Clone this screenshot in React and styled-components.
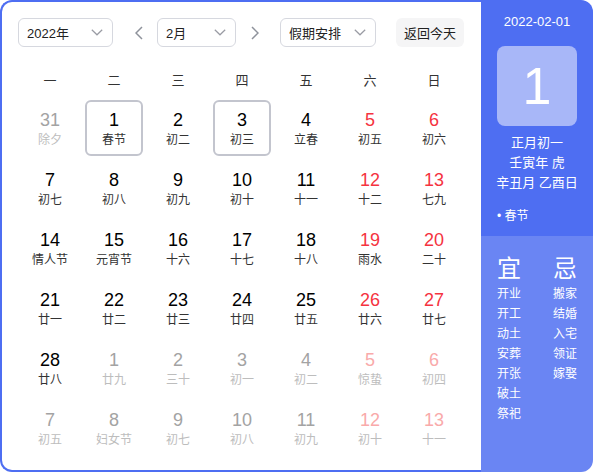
import React from "react";
import styled, { createGlobalStyle } from "styled-components";

const Global = createGlobalStyle`
  html, body { margin: 0; padding: 0; background: #fff; }
  body { font-family: "Liberation Sans", "Noto Sans CJK SC", sans-serif; }
  * { box-sizing: border-box; }
`;

const Frame = styled.div`
  width: 593px;
  height: 472px;
  display: flex;
`;

const Main = styled.div`
  flex: 1;
  border: 2px solid #4e6ef2;
  border-right: none;
  border-radius: 12px 0 0 12px;
  padding: 16px 15px 0 16px;
  background: #fff;
`;

const Toolbar = styled.div`
  display: flex;
  align-items: center;
  height: 29px;
`;

const Select = styled.div`
  width: ${(p) => p.$w}px;
  height: 29px;
  border: 1px solid #d6d8df;
  border-radius: 6px;
  display: flex;
  align-items: center;
  justify-content: space-between;
  padding: 0 9px 0 8px;
  font-size: 13px;
  color: #222;
  background: #fff;
`;

const ArrowBtn = styled.div`
  width: 20px;
  height: 29px;
  display: flex;
  align-items: center;
  justify-content: center;
  margin: ${(p) => p.$m};
`;

const TodayBtn = styled.div`
  margin-left: 20px;
  width: 68px;
  height: 29px;
  border-radius: 6px;
  background: #f5f5f6;
  display: flex;
  align-items: center;
  justify-content: center;
  font-size: 13px;
  color: #222;
`;

const Week = styled.div`
  display: grid;
  grid-template-columns: repeat(7, 64px);
  margin-top: 19px;
  height: 30px;
  line-height: 30px;
  text-align: center;
  font-size: 13px;
  color: #333;
`;

const Grid = styled.div`
  display: grid;
  grid-template-columns: repeat(7, 64px);
  grid-auto-rows: 56px;
  row-gap: 4px;
  margin-top: 4px;
`;

const Cell = styled.div`
  margin: 0 3px;
  border: 2px solid ${(p) => (p.$boxed ? "#c3c5ce" : "transparent")};
  border-radius: 6px;
  display: flex;
  flex-direction: column;
  align-items: center;
  padding-top: 7px;
`;

const numColor = (p) => {
  if (p.$other) return p.$weekend ? "#f9aaaa" : "#a3a3a3";
  return p.$weekend ? "#f5333f" : "#000";
};

const Num = styled.div`
  font-size: 18px;
  line-height: 22px;
  color: ${numColor};
`;

const Lunar = styled.div`
  font-size: 12px;
  line-height: 18px;
  color: ${(p) => (p.$other ? "#bdbdbd" : "#333")};
`;

const Side = styled.div`
  width: 112px;
  border-radius: 0 12px 12px 0;
  overflow: hidden;
  display: flex;
  flex-direction: column;
  color: #fff;
`;

const SideTop = styled.div`
  height: 236px;
  background: #4e6ef2;
  display: flex;
  flex-direction: column;
  align-items: center;
  padding-top: 12px;
`;

const DateLine = styled.div`
  font-size: 13px;
  line-height: 20px;
`;

const BigDay = styled.div`
  margin-top: 14px;
  width: 80px;
  height: 80px;
  border-radius: 8px;
  background: #a8b7f8;
  display: flex;
  align-items: center;
  justify-content: center;
  font-size: 52px;
  font-weight: 300;
  line-height: 1;
`;

const LunarInfo = styled.div`
  margin-top: 7px;
  text-align: center;
  font-size: 13px;
  line-height: 20px;
`;

const Festival = styled.div`
  align-self: stretch;
  padding-left: 16px;
  margin-top: 14px;
  font-size: 12px;
  line-height: 18px;
`;

const SideBottom = styled.div`
  flex: 1;
  background: #6a85f3;
  display: grid;
  grid-template-columns: 56px 56px;
  align-content: start;
  padding-top: 18px;
`;

const Col = styled.div`
  display: flex;
  flex-direction: column;
  align-items: center;
`;

const Head = styled.div`
  font-size: 24px;
  line-height: 30px;
`;

const Item = styled.div`
  font-size: 12px;
  line-height: 20px;
`;

const Chevron = () => (
  <svg width="12" height="7" viewBox="0 0 12 7">
    <polyline points="0.8,0.8 6,5.8 11.2,0.8" fill="none" stroke="#9a9ca4" strokeWidth="1.2" />
  </svg>
);

const Arrow = ({ dir }) => (
  <svg width="8" height="14" viewBox="0 0 8 14">
    <polyline
      points={dir === "left" ? "7,1 1,7 7,13" : "1,1 7,7 1,13"}
      fill="none"
      stroke="#8e929b"
      strokeWidth="1.5"
    />
  </svg>
);

const rows = [
  [["31", "除夕", 1], ["1", "春节", 0, 1], ["2", "初二"], ["3", "初三", 0, 1], ["4", "立春"], ["5", "初五"], ["6", "初六"]],
  [["7", "初七"], ["8", "初八"], ["9", "初九"], ["10", "初十"], ["11", "十一"], ["12", "十二"], ["13", "七九"]],
  [["14", "情人节"], ["15", "元宵节"], ["16", "十六"], ["17", "十七"], ["18", "十八"], ["19", "雨水"], ["20", "二十"]],
  [["21", "廿一"], ["22", "廿二"], ["23", "廿三"], ["24", "廿四"], ["25", "廿五"], ["26", "廿六"], ["27", "廿七"]],
  [["28", "廿八"], ["1", "廿九", 1], ["2", "三十", 1], ["3", "初一", 1], ["4", "初二", 1], ["5", "惊蛰", 1], ["6", "初四", 1]],
  [["7", "初五", 1], ["8", "妇女节", 1], ["9", "初七", 1], ["10", "初八", 1], ["11", "初九", 1], ["12", "初十", 1], ["13", "十一", 1]],
];

const yi = ["开业", "开工", "动土", "安葬", "开张", "破土", "祭祀"];
const ji = ["搬家", "结婚", "入宅", "领证", "嫁娶"];

export default function App() {
  return (
    <>
      <Global />
      <Frame>
        <Main>
          <Toolbar>
            <Select $w={95}>
              <span>2022年</span>
              <Chevron />
            </Select>
            <ArrowBtn $m="0 8px 0 16px">
              <Arrow dir="left" />
            </ArrowBtn>
            <Select $w={79}>
              <span>2月</span>
              <Chevron />
            </Select>
            <ArrowBtn $m="0 15px 0 9px">
              <Arrow dir="right" />
            </ArrowBtn>
            <Select $w={96}>
              <span>假期安排</span>
              <Chevron />
            </Select>
            <TodayBtn>返回今天</TodayBtn>
          </Toolbar>
          <Week>
            {["一", "二", "三", "四", "五", "六", "日"].map((d) => (
              <div key={d}>{d}</div>
            ))}
          </Week>
          <Grid>
            {rows.map((row, ri) =>
              row.map(([n, l, other, boxed], ci) => (
                <Cell key={`${ri}-${ci}`} $boxed={!!boxed}>
                  <Num $other={!!other} $weekend={ci >= 5}>{n}</Num>
                  <Lunar $other={!!other}>{l}</Lunar>
                </Cell>
              ))
            )}
          </Grid>
        </Main>
        <Side>
          <SideTop>
            <DateLine>2022-02-01</DateLine>
            <BigDay>1</BigDay>
            <LunarInfo>
              <div>正月初一</div>
              <div>壬寅年 虎</div>
              <div>辛丑月 乙酉日</div>
            </LunarInfo>
            <Festival>• 春节</Festival>
          </SideTop>
          <SideBottom>
            <Col>
              <Head>宜</Head>
              {yi.map((x) => (
                <Item key={x}>{x}</Item>
              ))}
            </Col>
            <Col>
              <Head>忌</Head>
              {ji.map((x) => (
                <Item key={x}>{x}</Item>
              ))}
            </Col>
          </SideBottom>
        </Side>
      </Frame>
    </>
  );
}
